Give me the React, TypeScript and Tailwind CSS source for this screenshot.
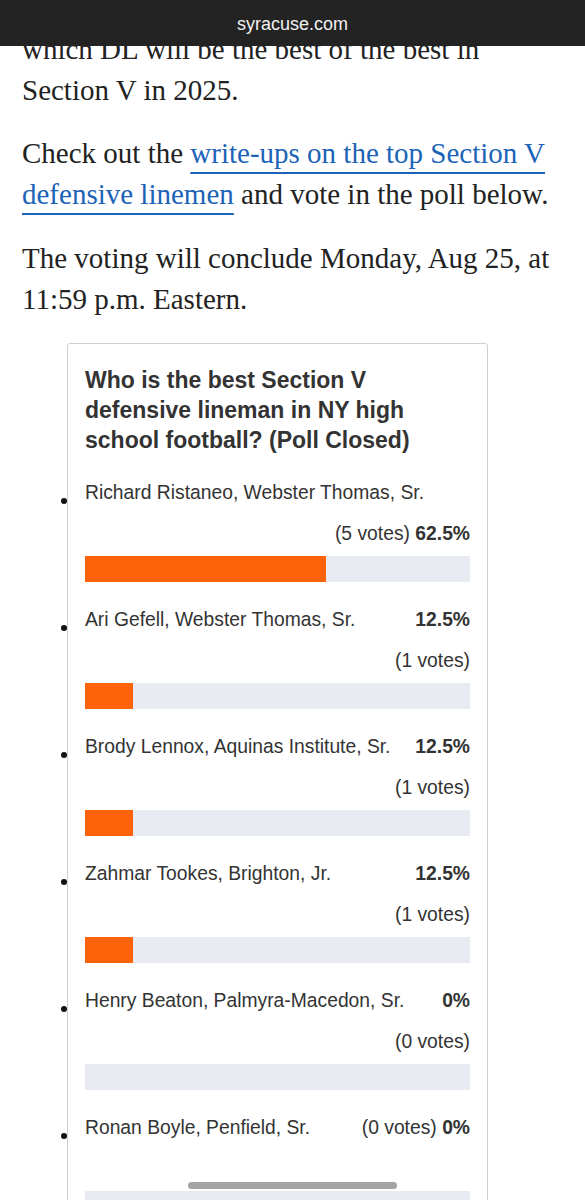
type Choice = {
  name: string;
  votes: number;
  pct: string;
  width: number;
  layout: 'wrap' | 'split' | 'inline';
};

const choices: Choice[] = [
  { name: 'Richard Ristaneo, Webster Thomas, Sr.', votes: 5, pct: '62.5%', width: 62.5, layout: 'wrap' },
  { name: 'Ari Gefell, Webster Thomas, Sr.', votes: 1, pct: '12.5%', width: 12.5, layout: 'split' },
  { name: 'Brody Lennox, Aquinas Institute, Sr.', votes: 1, pct: '12.5%', width: 12.5, layout: 'split' },
  { name: 'Zahmar Tookes, Brighton, Jr.', votes: 1, pct: '12.5%', width: 12.5, layout: 'split' },
  { name: 'Henry Beaton, Palmyra-Macedon, Sr.', votes: 0, pct: '0%', width: 0, layout: 'split' },
  { name: 'Ronan Boyle, Penfield, Sr.', votes: 0, pct: '0%', width: 0, layout: 'inline' },
];

function PollRow({ c }: { c: Choice }) {
  return (
    <li className="relative">
      <span className="absolute left-[-24px] top-[26px] w-[6px] h-[6px] rounded-full bg-[#111]" />
      {c.layout === 'wrap' && (
        <>
          <div className="h-[41px] leading-[41px] whitespace-nowrap">{c.name}</div>
          <div className="h-[41px] leading-[41px] text-right">
            ({c.votes} votes) <b className="font-bold">{c.pct}</b>
          </div>
        </>
      )}
      {c.layout === 'split' && (
        <>
          <div className="h-[41px] leading-[41px] flex justify-between whitespace-nowrap">
            <span>{c.name}</span>
            <b className="font-bold">{c.pct}</b>
          </div>
          <div className="h-[41px] leading-[41px] text-right">({c.votes} votes)</div>
        </>
      )}
      {c.layout === 'inline' && (
        <>
          <div className="h-[41px] leading-[41px] flex justify-between whitespace-nowrap">
            <span>{c.name}</span>
            <span>
              ({c.votes} votes) <b className="font-bold">{c.pct}</b>
            </span>
          </div>
          <div className="h-[41px]" />
        </>
      )}
      <div className="mt-[2px] h-[26px] bg-[#e9ebf3]">
        <div className="h-full bg-[#ff6309]" style={{ width: `${c.width}%` }} />
      </div>
    </li>
  );
}

export default function App() {
  return (
    <div className="relative h-[1200px] overflow-hidden bg-white">
      <div className="absolute inset-x-0 top-0 z-10 flex h-[46px] items-center justify-center bg-[#232323] pt-[3px] text-[18px] text-[#f2f2f2] font-['Liberation_Sans',Arial,sans-serif]">
        syracuse.com
      </div>

      <article className="px-[22px] pt-[29px] text-[29px] leading-[41px] text-[#222] font-['Liberation_Serif','Times_New_Roman',serif]">
        <p>which DL will be the best of the best in Section V in 2025.</p>
        <p className="mt-[22px]">
          Check out the{' '}
          <a className="text-[#1c63b7] underline decoration-[#1c63b7] decoration-2 underline-offset-[9px]">
            write-ups on the top Section V defensive linemen
          </a>{' '}
          and vote in the poll below.
        </p>
        <p className="mt-[23px]">The voting will conclude Monday, Aug 25, at 11:59 p.m. Eastern.</p>
      </article>

      <div className="ml-[67px] mt-[23px] w-[421px] rounded-[3px] border border-[#cfcfcf] px-[17px] pt-[21px] text-[#333] font-['Liberation_Sans',Arial,sans-serif]">
        <h2 className="text-[23px] font-bold leading-[30px]">
          Who is the best Section V defensive lineman in NY high school football? (Poll Closed)
        </h2>
        <ul className="mt-[17px] flex flex-col gap-[17px] text-[19.3px]">
          {choices.map((c) => (
            <PollRow key={c.name} c={c} />
          ))}
        </ul>
      </div>

      <div className="absolute bottom-[11px] left-[188px] z-10 h-[7px] w-[209px] rounded-full bg-[#a3a3a3]" />
    </div>
  );
}
